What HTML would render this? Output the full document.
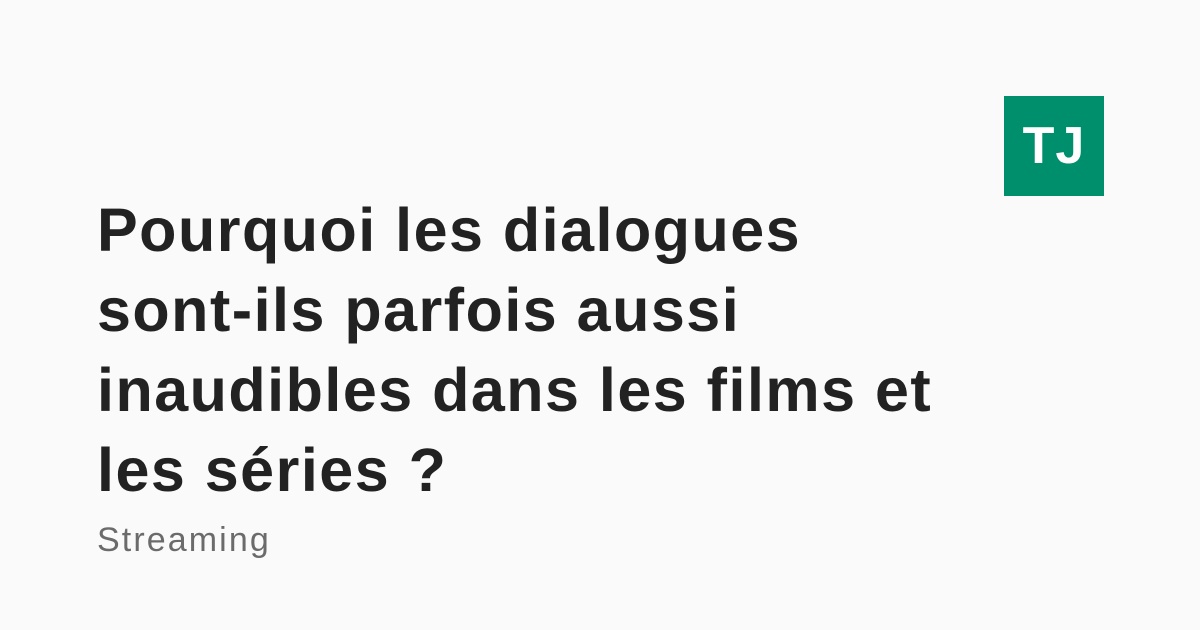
<!DOCTYPE html>
<html><head><meta charset="utf-8"><style>
html,body{margin:0;padding:0}
body{width:1200px;height:630px;background:#fafafa;position:relative;overflow:hidden;font-family:"Liberation Sans",sans-serif}
.logo{position:absolute;left:1004px;top:96px;width:100px;height:100px;background:#008f6c;color:#fff;font-weight:bold;font-size:52px;line-height:100px;text-align:center;letter-spacing:1px}
h1{position:absolute;left:97px;top:190px;margin:0;font-size:61px;line-height:80px;font-weight:bold;color:#222;letter-spacing:1.5px;width:950px}
.cat{position:absolute;left:97px;top:521px;font-size:34px;color:#6b6b6b;letter-spacing:2.1px}
</style></head><body>
<div class="logo">TJ</div>
<h1>Pourquoi les dialogues<br>sont-ils parfois aussi<br>inaudibles dans les films et<br>les séries ?</h1>
<div class="cat">Streaming</div>
</body></html>
